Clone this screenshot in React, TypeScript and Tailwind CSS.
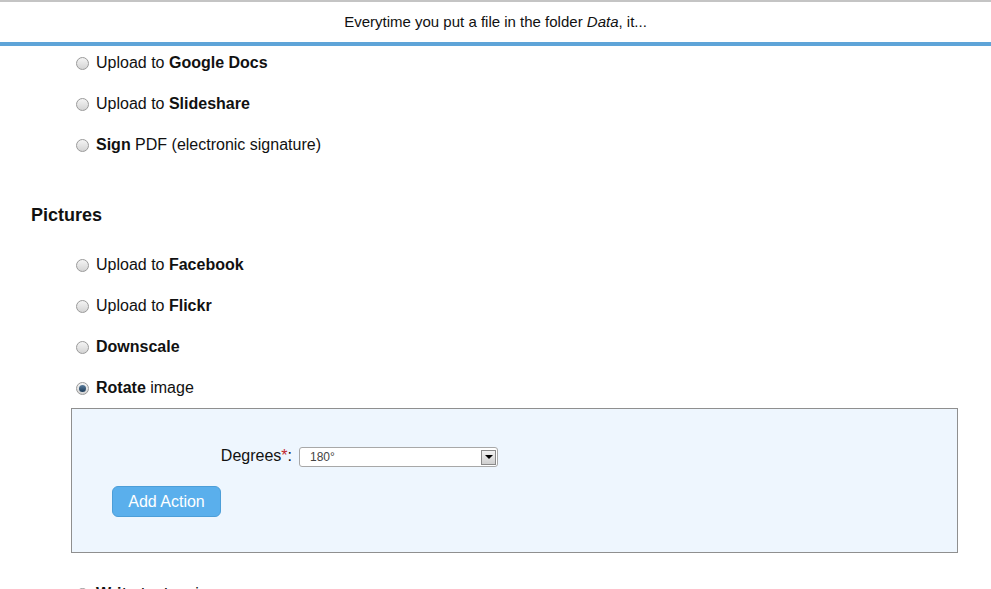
import React from "react";

function Radio({ checked }: { checked?: boolean }) {
  return (
    <span className="relative inline-block w-[13px] h-[13px] rounded-full border border-[#9a9a9a] bg-gradient-to-b from-[#f4f4f4] to-[#d4d4d4] shrink-0">
      {checked && (
        <span className="absolute left-[2px] top-[2px] w-[7px] h-[7px] rounded-full bg-gradient-to-b from-[#5a7d9c] to-[#1d3c5a]" />
      )}
    </span>
  );
}

function Row({ children, checked }: { children: React.ReactNode; checked?: boolean }) {
  return (
    <div className="flex items-center h-[20px] pl-[76px] gap-[7px]">
      <Radio checked={checked} />
      <span className="text-[16px] leading-[20px] text-[#111]">{children}</span>
    </div>
  );
}

export default function App() {
  return (
    <div className="w-[991px] h-[589px] overflow-hidden bg-white" style={{ fontFamily: '"Liberation Sans", Arial, sans-serif' }}>
      <div className="h-[42px] border-t-2 border-[#c4c4c4] flex items-center justify-center text-[15px] text-[#111]">
        <span>
          Everytime you put a file in the folder <i>Data</i>, it...
        </span>
      </div>
      <div className="h-[4px] bg-[#5ea4d8]" />
      <div className="pt-[7px] flex flex-col">
        <div className="flex flex-col gap-[21px]">
          <Row>
            Upload to <b>Google Docs</b>
          </Row>
          <Row>
            Upload to <b>Slideshare</b>
          </Row>
          <Row>
            <b>Sign</b> PDF (electronic signature)
          </Row>
        </div>
        <h2 className="mt-[49px] pl-[31px] h-[22px] leading-[22px] text-[18px] font-bold text-[#111]">Pictures</h2>
        <div className="mt-[29px] flex flex-col gap-[21px]">
          <Row>
            Upload to <b>Facebook</b>
          </Row>
          <Row>
            Upload to <b>Flickr</b>
          </Row>
          <Row>
            <b>Downscale</b>
          </Row>
          <Row checked>
            <b>Rotate</b> image
          </Row>
        </div>
        <div className="mt-[10px] ml-[71px] w-[887px] h-[145px] border border-[#8f8f8f] bg-[#eef6fe] flex flex-col">
          <div className="mt-[38px] flex items-center h-[20px]">
            <label className="w-[220px] text-right text-[16px] leading-[20px] text-[#111] -mt-[3px]">
              Degrees<span className="text-[#c0282d]">*</span>:
            </label>
            <div className="ml-[7px] w-[199px] h-[20px] bg-white border border-[#a8a8a8] rounded-[3px] flex items-center justify-between pl-[10px] pr-[1px]">
              <span className="text-[12px] text-[#444]">180°</span>
              <span className="w-[15px] h-[15px] border border-[#8a8a8a] bg-gradient-to-b from-[#f2f2f2] to-[#cfcfcf] flex items-center justify-center">
                <span className="w-0 h-0 border-l-[4px] border-r-[4px] border-t-[4px] border-l-transparent border-r-transparent border-t-black" />
              </span>
            </div>
          </div>
          <div className="mt-[19px] pl-[40px]">
            <button className="w-[109px] h-[31px] rounded-[6px] bg-[#5aafec] border border-[#4c9ed8] text-white text-[16px] leading-none">
              Add Action
            </button>
          </div>
        </div>
        <div className="mt-[31px] flex flex-col">
          <Row>
            <b>Write text</b> on image
          </Row>
        </div>
      </div>
    </div>
  );
}
